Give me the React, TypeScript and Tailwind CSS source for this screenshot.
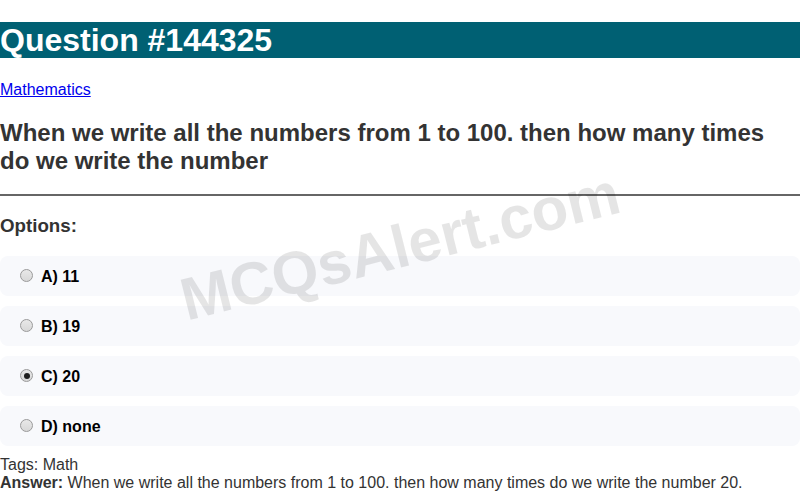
const options = [
  { label: "A) 11", checked: false },
  { label: "B) 19", checked: false },
  { label: "C) 20", checked: true },
  { label: "D) none", checked: false },
];

function Radio({ checked }: { checked: boolean }) {
  return (
    <span className="flex h-[13px] w-[13px] shrink-0 items-center justify-center rounded-full border border-[#9a9a9a] bg-gradient-to-b from-[#e8e8e8] to-[#d8d8d8]">
      {checked && <span className="h-[6px] w-[6px] rounded-full bg-[#1f1f1f]" />}
    </span>
  );
}

export default function App() {
  return (
    <div className="relative min-h-[492px] bg-white font-['Liberation_Sans',Arial,sans-serif] text-[#333] leading-[1.15]">
      <h1 className="mt-[22px] bg-[#006073] text-[32px] font-bold leading-[36px] text-white">
        Question #144325
      </h1>

      <div className="mt-[23px] text-base leading-[18px]">
        <a href="#" className="text-[#0000ee] underline">
          Mathematics
        </a>
      </div>

      <h2 className="mt-[20px] text-[24px] font-bold leading-[27.6px]">
        When we write all the numbers from 1 to 100. then how many times do we write the number
      </h2>

      <hr className="mt-[20px] border-t-2 border-[#666]" />

      <h4 className="mt-[19px] text-[18.72px] font-bold leading-[21.5px]">Options:</h4>

      <div className="mt-[19px] flex flex-col gap-[10px]">
        {options.map((o) => (
          <div
            key={o.label}
            className="flex h-[40px] items-center gap-[8px] rounded-[8px] bg-[#f8f9fc] pl-[20px] text-base font-bold text-black"
          >
            <Radio checked={o.checked} />
            <span className="pt-[2px]">{o.label}</span>
          </div>
        ))}
      </div>

      <div className="mt-[10px] text-base leading-[18px]">
        <div>Tags: Math</div>
        <div>
          <span className="font-bold">Answer:</span> When we write all the numbers from 1 to 100. then how many times do we write the number 20.
        </div>
      </div>

      <div className="pointer-events-none fixed inset-0 flex items-center justify-center">
        <span className="-rotate-[14deg] text-[60px] font-bold text-black/10">MCQsAlert.com</span>
      </div>
    </div>
  );
}
